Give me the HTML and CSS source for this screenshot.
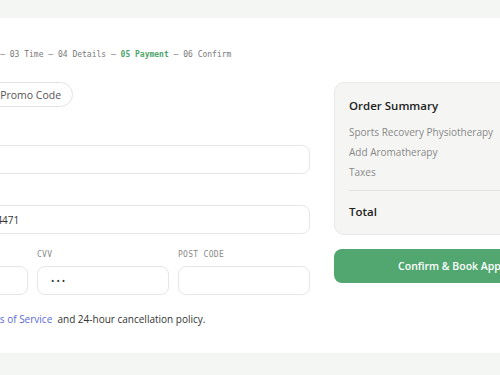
FILE: index.html
```html
<!DOCTYPE html>
<html lang="en">
<head>
    <meta charset="UTF-8">
    <meta name="viewport" content="width=device-width, initial-scale=1.0">
    <title>Book Appointment - Payment</title>
    <link rel="stylesheet" href="styles.css">
</head>
<body>
    <div class="topbar"></div>

    <div class="page">
        <div class="steps">01 Service — 02 Date — 03 Time — 04 Details — <strong>05 Payment</strong> — 06 Confirm</div>

        <div class="layout">
            <form class="payment" id="paymentForm">
                <div class="promo">
                    <input type="text" class="promo-input" placeholder="Code">
                    <button type="button" class="pill">Apply Promo Code</button>
                </div>

                <div class="field first">
                    <label for="cardName">Name on card</label>
                    <input type="text" id="cardName" class="input">
                </div>

                <div class="field">
                    <label for="cardNumber">Card number</label>
                    <input type="text" id="cardNumber" class="input" value="4242 4242 4242 4471">
                </div>

                <div class="field-row">
                    <div class="field">
                        <label for="expiry">Expiry</label>
                        <input type="text" id="expiry" class="input">
                    </div>
                    <div class="field">
                        <label for="cvv">CVV</label>
                        <input type="text" id="cvv" class="input dots" value="•••">
                    </div>
                    <div class="field">
                        <label for="postCode">Post code</label>
                        <input type="text" id="postCode" class="input">
                    </div>
                </div>

                <p class="terms">You agree to the <a href="#">Terms of Service</a>&nbsp; and 24-hour cancellation policy.</p>
            </form>

            <aside class="side">
                <div class="summary">
                    <h2>Order Summary</h2>
                    <ul>
                        <li><span>Sports Recovery Physiotherapy</span><span>$95.00</span></li>
                        <li><span>Add Aromatherapy</span><span>$15.00</span></li>
                        <li><span>Taxes</span><span>$11.00</span></li>
                    </ul>
                    <div class="total"><span>Total</span><span>$121.00</span></div>
                </div>
                <button type="button" class="confirm">Confirm &amp; Book Appointment</button>
            </aside>
        </div>
    </div>

    <div class="footer"></div>
</body>
</html>
```

FILE: styles.css
```css
body {
    margin: 0;
    background-color: #fff;
    font-family: "Open Sans", Arial, sans-serif;
    color: #333;
    overflow: hidden;
}

.topbar {
    height: 18px;
    background-color: #f4f6f3;
}

.page {
    width: 716px;
    margin-left: -104px;
}

.steps {
    margin-top: 32px;
    margin-left: 3px;
    font-family: "DejaVu Sans Mono", monospace;
    font-size: 8px;
    line-height: 10px;
    color: #7a7a7a;
    white-space: nowrap;
}

.steps strong {
    color: #4fa56c;
}

.layout {
    display: grid;
    grid-template-columns: 414px 278px;
    gap: 24px;
    margin-top: 22px;
    align-items: start;
}

/* left column */
.promo {
    display: flex;
    gap: 8px;
    height: 25px;
}

.promo-input {
    width: 47px;
    border: 1px solid #e8e8e8;
    border-radius: 13px;
    font-family: inherit;
}

.pill {
    height: 25px;
    padding: 0 11px 0 12px;
    border: 1px solid #e3e3e3;
    border-radius: 13px;
    background-color: #fff;
    font-family: "Open Sans", Arial, sans-serif;
    font-size: 10.5px;
    color: #555;
}

.field {
    display: flex;
    flex-direction: column;
    gap: 6px;
    margin-top: 15px;
    min-width: 0;
}

.field.first {
    margin-top: 22px;
}

.field label {
    font-family: "DejaVu Sans Mono", monospace;
    font-size: 8px;
    line-height: 10px;
    letter-spacing: 0.3px;
    text-transform: uppercase;
    color: #8a8a8a;
}

.input {
    width: 100%;
    height: 29px;
    box-sizing: border-box;
    padding: 0 13px;
    border: 1px solid #e6e6e6;
    border-radius: 8px;
    background-color: #fff;
    font-family: "Open Sans", Arial, sans-serif;
    font-size: 10px;
    color: #333;
    outline: none;
}

#cardNumber {
    padding-left: 23px;
}

.dots {
    letter-spacing: 2px;
    font-size: 9px;
}

.field-row {
    display: grid;
    grid-template-columns: repeat(3, minmax(0, 1fr));
    gap: 9px;
    margin-top: 1px;
}

.terms {
    margin: 17px 0 0;
    font-size: 10px;
    line-height: 15px;
    color: #333;
}

.terms a {
    color: #5a6ad6;
    text-decoration: none;
}

/* right column */
.summary {
    padding: 14px;
    background-color: #f5f6f4;
    border: 1px solid #e8e9e6;
    border-radius: 10px;
}

.summary h2 {
    margin: 0;
    font-size: 11.5px;
    line-height: 17px;
    font-weight: 600;
    color: #222;
}

.summary ul {
    list-style-type: none;
    margin: 8px 0 0;
    padding: 0 0 8px;
    border-bottom: 1px solid #e3e4e1;
}

.summary li {
    display: flex;
    justify-content: space-between;
    font-size: 10px;
    line-height: 20px;
    color: #888;
}

.total {
    display: flex;
    justify-content: space-between;
    padding-top: 12px;
    font-size: 11.5px;
    line-height: 17px;
    font-weight: 600;
    color: #222;
}

.confirm {
    display: block;
    width: 100%;
    height: 34px;
    margin-top: 14px;
    border: none;
    border-radius: 8px;
    background-color: #52a770;
    color: #fff;
    font-family: "Open Sans", Arial, sans-serif;
    font-size: 10.5px;
    font-weight: 600;
}

.footer {
    position: absolute;
    left: 0;
    right: 0;
    top: 353px;
    height: 22px;
    background-color: #f4f6f3;
}
```
